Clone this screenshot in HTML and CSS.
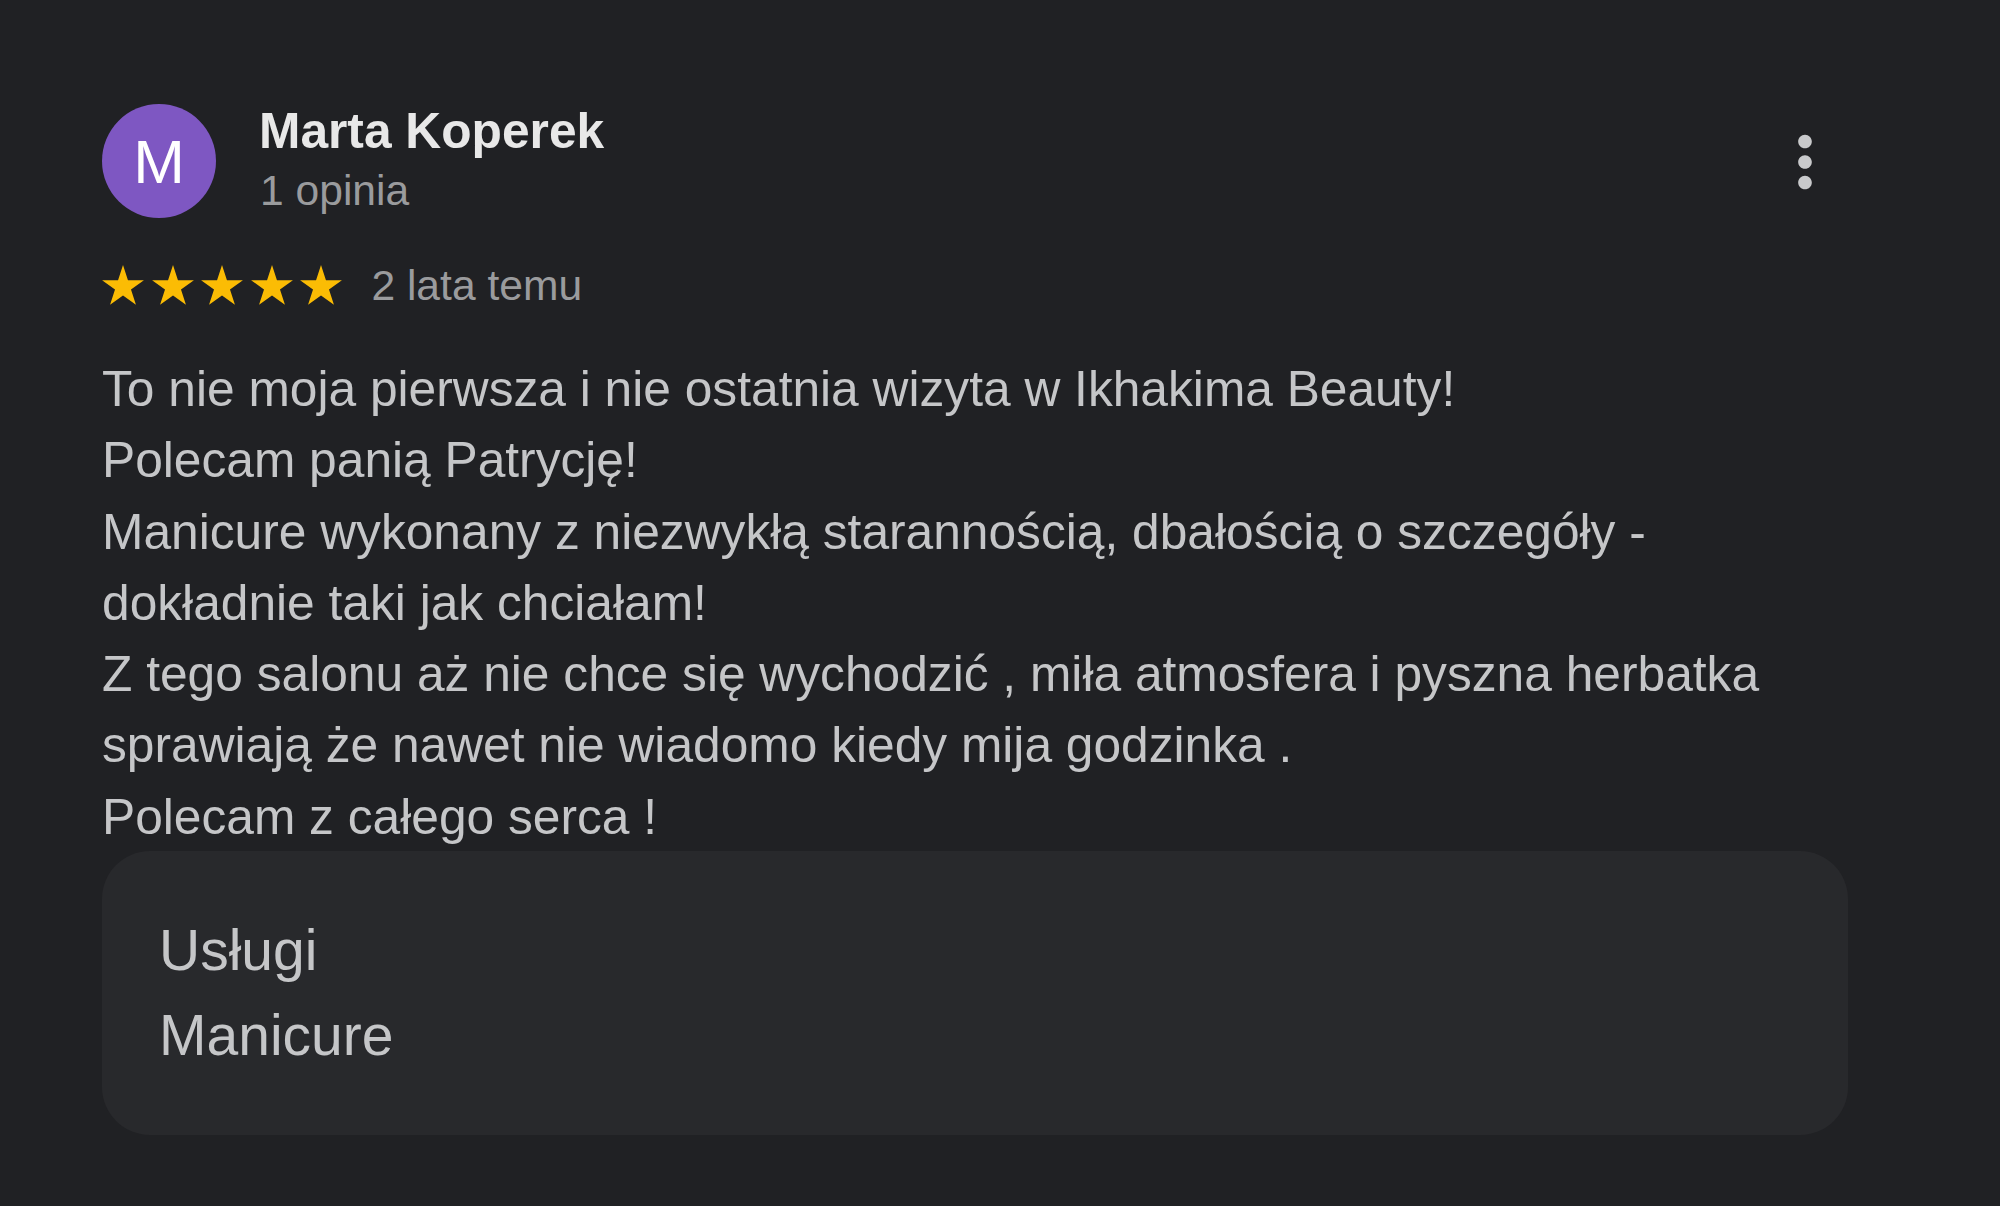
FILE: index.html
```html
<!DOCTYPE html>
<html lang="pl">
<head>
  <meta charset="UTF-8">
  <title>Opinia - Marta Koperek</title>
  <link rel="stylesheet" href="styles.css">
</head>
<body>

<div class="review">
  <div class="review-header">
    <div class="avatar">M</div>
    <div class="author">
      <div class="author-name">Marta Koperek</div>
      <div class="author-meta">1 opinia</div>
    </div>
    <svg class="more" viewBox="0 0 24 24" aria-label="Więcej">
      <path d="M12 8c1.1 0 2-.9 2-2s-.9-2-2-2-2 .9-2 2 .9 2 2 2zm0 2c-1.1 0-2 .9-2 2s.9 2 2 2 2-.9 2-2-.9-2-2-2zm0 6c-1.1 0-2 .9-2 2s.9 2 2 2 2-.9 2-2-.9-2-2-2z"/>
    </svg>
  </div>

  <div class="rating">
    <div class="stars">
      <svg class="star" viewBox="0 0 42 41"><polygon points="21,0 25.94,15.2 41.92,15.2 28.99,24.6 33.93,39.8 21,30.4 8.07,39.8 13.01,24.6 0.08,15.2 16.06,15.2"/></svg>
      <svg class="star" viewBox="0 0 42 41"><polygon points="21,0 25.94,15.2 41.92,15.2 28.99,24.6 33.93,39.8 21,30.4 8.07,39.8 13.01,24.6 0.08,15.2 16.06,15.2"/></svg>
      <svg class="star" viewBox="0 0 42 41"><polygon points="21,0 25.94,15.2 41.92,15.2 28.99,24.6 33.93,39.8 21,30.4 8.07,39.8 13.01,24.6 0.08,15.2 16.06,15.2"/></svg>
      <svg class="star" viewBox="0 0 42 41"><polygon points="21,0 25.94,15.2 41.92,15.2 28.99,24.6 33.93,39.8 21,30.4 8.07,39.8 13.01,24.6 0.08,15.2 16.06,15.2"/></svg>
      <svg class="star" viewBox="0 0 42 41"><polygon points="21,0 25.94,15.2 41.92,15.2 28.99,24.6 33.93,39.8 21,30.4 8.07,39.8 13.01,24.6 0.08,15.2 16.06,15.2"/></svg>
    </div>
    <span class="date">2 lata temu</span>
  </div>

  <div class="review-text">
    To nie moja pierwsza i nie ostatnia wizyta w Ikhakima Beauty!<br>
    Polecam panią Patrycję!<br>
    Manicure wykonany z niezwykłą starannością, dbałością o szczegóły -<br>
    dokładnie taki jak chciałam!<br>
    Z tego salonu aż nie chce się wychodzić , miła atmosfera i pyszna herbatka<br>
    sprawiają że nawet nie wiadomo kiedy mija godzinka .<br>
    Polecam z całego serca !
  </div>

  <div class="services">
    <div class="services-label">Usługi</div>
    <div class="services-value">Manicure</div>
  </div>
</div>

</body>
</html>
```

FILE: styles.css
```css
body {
  margin: 0;
  background-color: #202124;
  font-family: "Liberation Sans", Arial, sans-serif;
  color: #c5c6c8;
}
.review {
  width: 1746px;
  padding: 100px 0 0 102px;
}
.review-header {
  display: flex;
  align-items: flex-start;
}
.avatar {
  width: 114px;
  height: 114px;
  margin-top: 4px;
  border-radius: 50%;
  background-color: #7e57c2;
  color: #fff;
  font-size: 62px;
  display: flex;
  align-items: center;
  justify-content: center;
  flex-shrink: 0;
}
.author {
  margin-left: 43px;
  flex: 1;
}
.author-name {
  font-size: 49.7px;
  font-weight: bold;
  line-height: 62px;
  color: #e8e8e8;
}
.author-meta {
  margin-left: 1px;
  font-size: 42.6px;
  line-height: 56px;
  color: #9a9b9d;
}
.more {
  width: 82px;
  height: 82px;
  margin-top: 21px;
  margin-right: 2px;
  fill: #c8c9cb;
}
.rating {
  display: flex;
  align-items: center;
  height: 56px;
  margin-top: 39px;
}
.stars {
  display: flex;
  gap: 7.6px;
}
.star {
  width: 42px;
  height: 41px;
  fill: #fbbc04;
}
.date {
  margin-left: 29px;
  font-size: 42.6px;
  line-height: 56px;
  color: #9a9b9d;
}
.review-text {
  margin-top: 41px;
  font-size: 49.7px;
  line-height: 71.3px;
}
.services {
  margin-top: -2px;
  padding: 57px 52px 57px 57px;
  background-color: #28292c;
  border-radius: 48px;
  font-size: 57px;
  line-height: 85px;
}
```
